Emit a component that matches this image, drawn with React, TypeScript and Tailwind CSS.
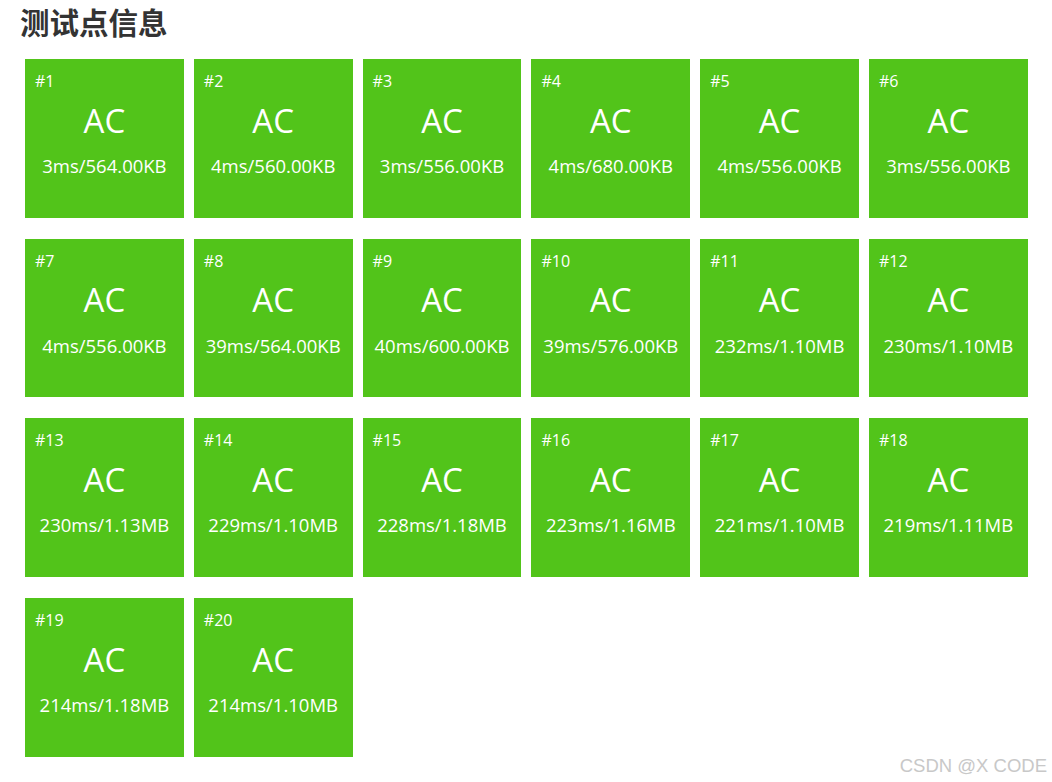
import React from "react";

const data: [string, string][] = [
  ["3ms", "564.00KB"],
  ["4ms", "560.00KB"],
  ["3ms", "556.00KB"],
  ["4ms", "680.00KB"],
  ["4ms", "556.00KB"],
  ["3ms", "556.00KB"],
  ["4ms", "556.00KB"],
  ["39ms", "564.00KB"],
  ["40ms", "600.00KB"],
  ["39ms", "576.00KB"],
  ["232ms", "1.10MB"],
  ["230ms", "1.10MB"],
  ["230ms", "1.13MB"],
  ["229ms", "1.10MB"],
  ["228ms", "1.18MB"],
  ["223ms", "1.16MB"],
  ["221ms", "1.10MB"],
  ["219ms", "1.11MB"],
  ["214ms", "1.18MB"],
  ["214ms", "1.10MB"],
];

export default function App() {
  return (
    <div className="relative w-[1052px] h-[782px] bg-white overflow-hidden">
      <h1
        className="pl-[20px] pt-[4px] text-[29.5px] leading-[35px] font-bold text-[#333]"
        style={{ fontFamily: '"Noto Sans CJK SC", sans-serif' }}
      >
        测试点信息
      </h1>
      <div
        className="ml-[25px] mt-[20px] flex flex-wrap gap-x-[10px] gap-y-[20.9px] w-[1020px]"
        style={{ fontFamily: '"Open Sans", sans-serif' }}
      >
        {data.map(([t, m], i) => (
          <div
            key={i}
            className="w-[158.8px] h-[158.8px] bg-[#52c41a] text-white flex flex-col px-[10px] pt-[12px]"
          >
            <div className="text-[16px] leading-[20px] font-medium">#{i + 1}</div>
            <div className="text-center text-[33px] leading-[40px] mt-[9.6px]">AC</div>
            <div className="text-center text-[18.5px] leading-[24px] mt-[13.5px] whitespace-nowrap">
              {t}/{m}
            </div>
          </div>
        ))}
      </div>
      <div
        className="absolute right-[5px] bottom-[6px] text-[18.5px] leading-[21px] text-[#c8c8c8]"
        style={{ fontFamily: '"Liberation Sans", sans-serif' }}
      >
        CSDN @X CODE
      </div>
    </div>
  );
}
